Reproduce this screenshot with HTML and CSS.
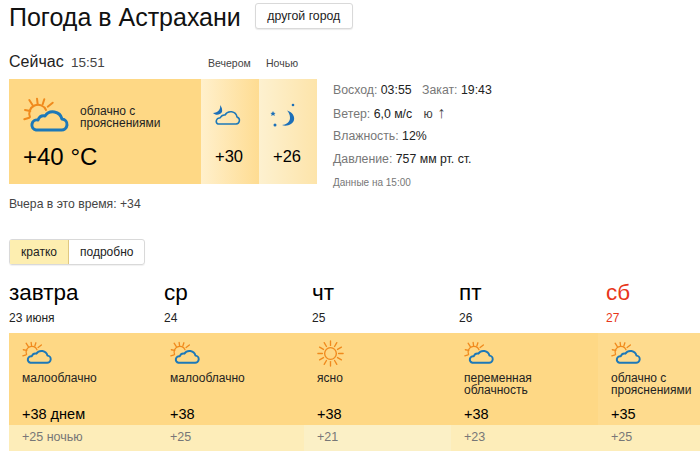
FILE: index.html
```html
<!DOCTYPE html>
<html lang="ru">
<head>
    <meta charset="UTF-8">
    <title>Погода в Астрахани</title>
    <link rel="stylesheet" href="styles.css">
</head>
<body>
    <svg class="defs" width="0" height="0">
        <symbol id="partly" viewBox="0 0 46 36">
            <g class="sun-stroke">
                <path d="M7 20A8.5 8.5 0 0 1 23 13"/>
                <path d="M2 13L7.3 14M1.3 22.3L6.3 20.7M6.3 3L9.7 8.3M14 1.7L14.7 7.3M21.3 2.3L19.7 7.3M29.700 5.700L24.700 9.700"/>
            </g>
            <path class="cloud-stroke" d="M13 33H38a5.5 5.5 0 0 0 1-11a9.5 9.5 0 0 0-17-3q-5-1-7 4a5 5 0 0 0-2 10z"/>
        </symbol>
        <symbol id="evening" viewBox="0 0 30 24">
            <path class="moon-fill" d="M7 2C8 6 5 10 0 10C3 13 7 12 9 9C9.500 7 9 4 7 2z"/>
            <path class="cloud-thin" d="M5 21H23a3.600 3.600 0 0 0 1-7a6.500 6.500 0 0 0-12-2q-3-.5-5 3a3.200 3.200 0 0 0-2 6z"/>
        </symbol>
        <symbol id="night" viewBox="0 0 26 26">
            <path class="moon-fill" d="M17 7.500C22 9 25 13 24 17C23 21 17 24 12 22C16 22 20 19 20 15C20 12 19 9.500 17 7.500z"/>
            <path class="moon-fill" d="M3 8l.8 1.700 1.800.2-1.300 1.200.4 1.800-1.700-.9-1.700.9.4-1.800L.4 9.900l1.800-.2z"/>
            <circle class="moon-fill" cx="5" cy="22" r="1.500"/>
            <circle class="moon-fill" cx="23" cy="2" r="1.300"/>
        </symbol>
        <symbol id="clear" viewBox="0 0 30 30">
            <g class="sun-stroke sun-thin">
                <circle cx="15" cy="15" r="6.500"/>
                <line x1="15" y1="1" x2="15" y2="6"/>
                <line x1="15" y1="1" x2="15" y2="6" transform="rotate(30 15 15)"/>
                <line x1="15" y1="1" x2="15" y2="6" transform="rotate(60 15 15)"/>
                <line x1="15" y1="1" x2="15" y2="6" transform="rotate(90 15 15)"/>
                <line x1="15" y1="1" x2="15" y2="6" transform="rotate(120 15 15)"/>
                <line x1="15" y1="1" x2="15" y2="6" transform="rotate(150 15 15)"/>
                <line x1="15" y1="1" x2="15" y2="6" transform="rotate(180 15 15)"/>
                <line x1="15" y1="1" x2="15" y2="6" transform="rotate(210 15 15)"/>
                <line x1="15" y1="1" x2="15" y2="6" transform="rotate(240 15 15)"/>
                <line x1="15" y1="1" x2="15" y2="6" transform="rotate(270 15 15)"/>
                <line x1="15" y1="1" x2="15" y2="6" transform="rotate(300 15 15)"/>
                <line x1="15" y1="1" x2="15" y2="6" transform="rotate(330 15 15)"/>
            </g>
        </symbol>
    </svg>

    <header class="page-head">
        <h1>Погода в Астрахани</h1>
        <button class="btn" type="button">другой город</button>
    </header>

    <section class="now">
        <div class="now-left">
            <div class="now-labels">
                <div class="now-title">Сейчас <span class="now-time">15:51</span></div>
                <div class="part-label part-evening">Вечером</div>
                <div class="part-label part-night">Ночью</div>
            </div>
            <div class="now-panel">
                <div class="now-main">
                    <div class="now-cond">
                        <svg class="icon-big"><use href="#partly"/></svg>
                        <div class="now-cond-text">облачно с<br>прояснениями</div>
                    </div>
                    <div class="now-temp">+40 °C</div>
                </div>
                <div class="now-part">
                    <svg class="icon-evening"><use href="#evening"/></svg>
                    <div class="part-temp">+30</div>
                </div>
                <div class="now-part">
                    <svg class="icon-night"><use href="#night"/></svg>
                    <div class="part-temp">+26</div>
                </div>
            </div>
            <div class="yesterday">Вчера в это время: +34</div>
        </div>
        <ul class="details">
            <li>Восход: <b>03:55</b> <span class="gap">Закат:</span> <b>19:43</b></li>
            <li>Ветер: <b>6,0 м/с</b> <span class="wind">ю <span class="arrow">↑</span></span></li>
            <li>Влажность: <b>12%</b></li>
            <li>Давление: <b>757 мм рт. ст.</b></li>
            <li class="details-note">Данные на 15:00</li>
        </ul>
    </section>

    <div class="tabs">
        <span class="tab tab-active">кратко</span>
        <span class="tab">подробно</span>
    </div>

    <section class="forecast">
        <div class="days">
            <div class="day"><div class="day-name">завтра</div><div class="day-date">23 июня</div></div>
            <div class="day"><div class="day-name">ср</div><div class="day-date">24</div></div>
            <div class="day"><div class="day-name">чт</div><div class="day-date">25</div></div>
            <div class="day"><div class="day-name">пт</div><div class="day-date">26</div></div>
            <div class="day day-off"><div class="day-name">сб</div><div class="day-date">27</div></div>
        </div>
        <div class="cells">
            <div class="cell">
                <svg class="icon-small"><use href="#partly"/></svg>
                <div class="cell-cond">малооблачно</div>
                <div class="cell-temp">+38 днем</div>
            </div>
            <div class="cell">
                <svg class="icon-small"><use href="#partly"/></svg>
                <div class="cell-cond">малооблачно</div>
                <div class="cell-temp">+38</div>
            </div>
            <div class="cell">
                <svg class="icon-clear"><use href="#clear"/></svg>
                <div class="cell-cond">ясно</div>
                <div class="cell-temp">+38</div>
            </div>
            <div class="cell">
                <svg class="icon-small"><use href="#partly"/></svg>
                <div class="cell-cond">переменная<br>облачность</div>
                <div class="cell-temp">+38</div>
            </div>
            <div class="cell cell-last">
                <svg class="icon-small"><use href="#partly"/></svg>
                <div class="cell-cond">облачно с<br>прояснениями</div>
                <div class="cell-temp">+35</div>
            </div>
            <div class="cell-night">+25 ночью</div>
            <div class="cell-night">+25</div>
            <div class="cell-night cell-night-pale">+21</div>
            <div class="cell-night">+23</div>
            <div class="cell-night">+25</div>
        </div>
    </section>
</body>
</html>
```

FILE: styles.css
```css
html, body {
    margin: 0;
    padding: 0;
    height: 460px;
    overflow: hidden;
}
body {
    font-family: "Liberation Sans", Arial, sans-serif;
    color: #000;
    background: #fff;
    width: 700px;
    box-sizing: border-box;
    padding-left: 9px;
}
.defs {
    position: absolute;
}
.sun-stroke {
    fill: none;
    stroke: #f08a1d;
    stroke-width: 2;
    stroke-linecap: round;
}
.sun-thin {
    stroke-width: 1.500;
}
.cloud-stroke {
    fill: none;
    stroke: #1c78b8;
    stroke-width: 3;
    stroke-linejoin: round;
}
.cloud-thin {
    fill: none;
    stroke: #1c78b8;
    stroke-width: 1.500;
    stroke-linejoin: round;
}
.moon-fill {
    fill: #1c6fb8;
}

.page-head {
    display: flex;
    align-items: flex-start;
    height: 52px;
    padding-top: 3px;
    box-sizing: border-box;
}
h1 {
    margin: 0 14px 0 0;
    font-size: 25px;
    font-weight: normal;
    line-height: 28px;
    color: #111;
}
.btn {
    width: 98px;
    height: 26px;
    padding: 0;
    font-family: inherit;
    font-size: 12.300px;
    color: #222;
    background: #fff;
    border: 1px solid #d9d9d9;
    border-radius: 3px;
    box-shadow: 0 1px 1px rgba(0,0,0,0.08);
}

.now {
    display: flex;
    height: 187px;
}
.now-left {
    width: 308px;
    margin-right: 16px;
}
.now-labels {
    display: flex;
    align-items: baseline;
    height: 27px;
    padding-top: 1px;
    box-sizing: border-box;
}
.now-title {
    width: 199px;
    font-size: 16px;
    color: #222;
}
.now-time {
    margin-left: 3px;
    font-size: 13.500px;
    color: #444;
}
.part-label {
    font-size: 10.500px;
    color: #444;
}
.part-evening {
    width: 58px;
}
.now-panel {
    display: flex;
    height: 105px;
}
.now-main {
    width: 192px;
    padding: 18px 0 0 14px;
    box-sizing: border-box;
    background: #fed885;
}
.now-cond {
    display: flex;
    align-items: center;
    height: 36px;
}
.icon-big {
    width: 46px;
    height: 36px;
    margin-right: 11px;
}
.now-cond-text {
    margin-top: 3px;
    font-size: 12px;
    line-height: 12px;
    color: #222;
}
.now-temp {
    margin-top: 9px;
    font-size: 24px;
    line-height: 30px;
}
.now-part {
    width: 58px;
    display: flex;
    flex-direction: column;
    background: linear-gradient(to right, #fff0cc, #fedc92);
}
.now-part:last-child {
    background: linear-gradient(to right, #fdf1d0, #fde4aa);
}
.icon-evening {
    width: 30px;
    height: 24px;
    margin: 24px 0 0 12px;
}
.icon-night {
    width: 26px;
    height: 26px;
    margin: 24px 0 0 11px;
}
.part-temp {
    margin-top: 19px;
    padding-right: 2px;
    font-size: 16.500px;
    line-height: 20px;
    text-align: center;
}
.now-part:last-child .part-temp {
    margin-top: 17px;
}
.yesterday {
    margin-top: 12px;
    font-size: 12.200px;
    line-height: 16px;
    color: #444;
}

.details {
    list-style: none;
    margin: 0;
    padding: 30px 0 0;
}
.details li {
    height: 23px;
    font-size: 12.300px;
    line-height: 16px;
    color: #777;
}
.details b {
    font-weight: normal;
    color: #222;
}
.gap {
    margin-left: 7px;
}
.wind {
    margin-left: 8px;
    color: #444;
}
.arrow {
    margin-left: 1px;
    font-size: 16px;
}
.details .details-note {
    font-size: 10px;
    margin-top: 1px;
    color: #777;
}

.tabs {
    display: inline-flex;
    height: 26px;
    box-sizing: border-box;
    border: 1px solid #d9d9d9;
    border-radius: 3px;
    font-size: 12px;
    line-height: 24px;
    color: #222;
    box-shadow: 0 1px 1px rgba(0,0,0,0.06);
}
.tab {
    padding: 0 11px;
}
.tab-active {
    width: 59px;
    padding: 0;
    text-align: center;
    background: #fdeeb0;
    border-right: 1px solid #e0c880;
    box-sizing: border-box;
}

.forecast {
    margin-top: 15px;
}
.days {
    display: grid;
    grid-template-columns: 155px 148px 147px 147px 1fr;
    height: 53px;
}
.day-name {
    font-size: 22.500px;
    line-height: 26px;
}
.day-date {
    margin-top: 5px;
    font-size: 12px;
    line-height: 14px;
    color: #222;
}
.day-off {
    color: #e8361a;
}
.day-off .day-date {
    color: #e8361a;
}
.cells {
    display: grid;
    grid-template-columns: 148px 147px 147px 147px 1fr;
    grid-template-rows: 92px 26px;
}
.cell {
    padding: 8px 0 0 13px;
    background: #fed885;
}
.cell-last {
    background: #fedb8e;
}
.icon-small {
    display: block;
    width: 30px;
    height: 24px;
}
.icon-clear {
    display: block;
    width: 27px;
    height: 27px;
    margin: -1px 0 -2px 0;
}
.cell-cond {
    margin-top: 7px;
    height: 30px;
    font-size: 12px;
    line-height: 12px;
    color: #222;
}
.cell-temp {
    margin-top: 3px;
    font-size: 14.500px;
    line-height: 18px;
}
.cell-night {
    padding-left: 13px;
    font-size: 12.500px;
    line-height: 24px;
    color: #777;
    background: #fdedb9;
}
.cell-night-pale {
    background: #fbf0c6;
}
```
